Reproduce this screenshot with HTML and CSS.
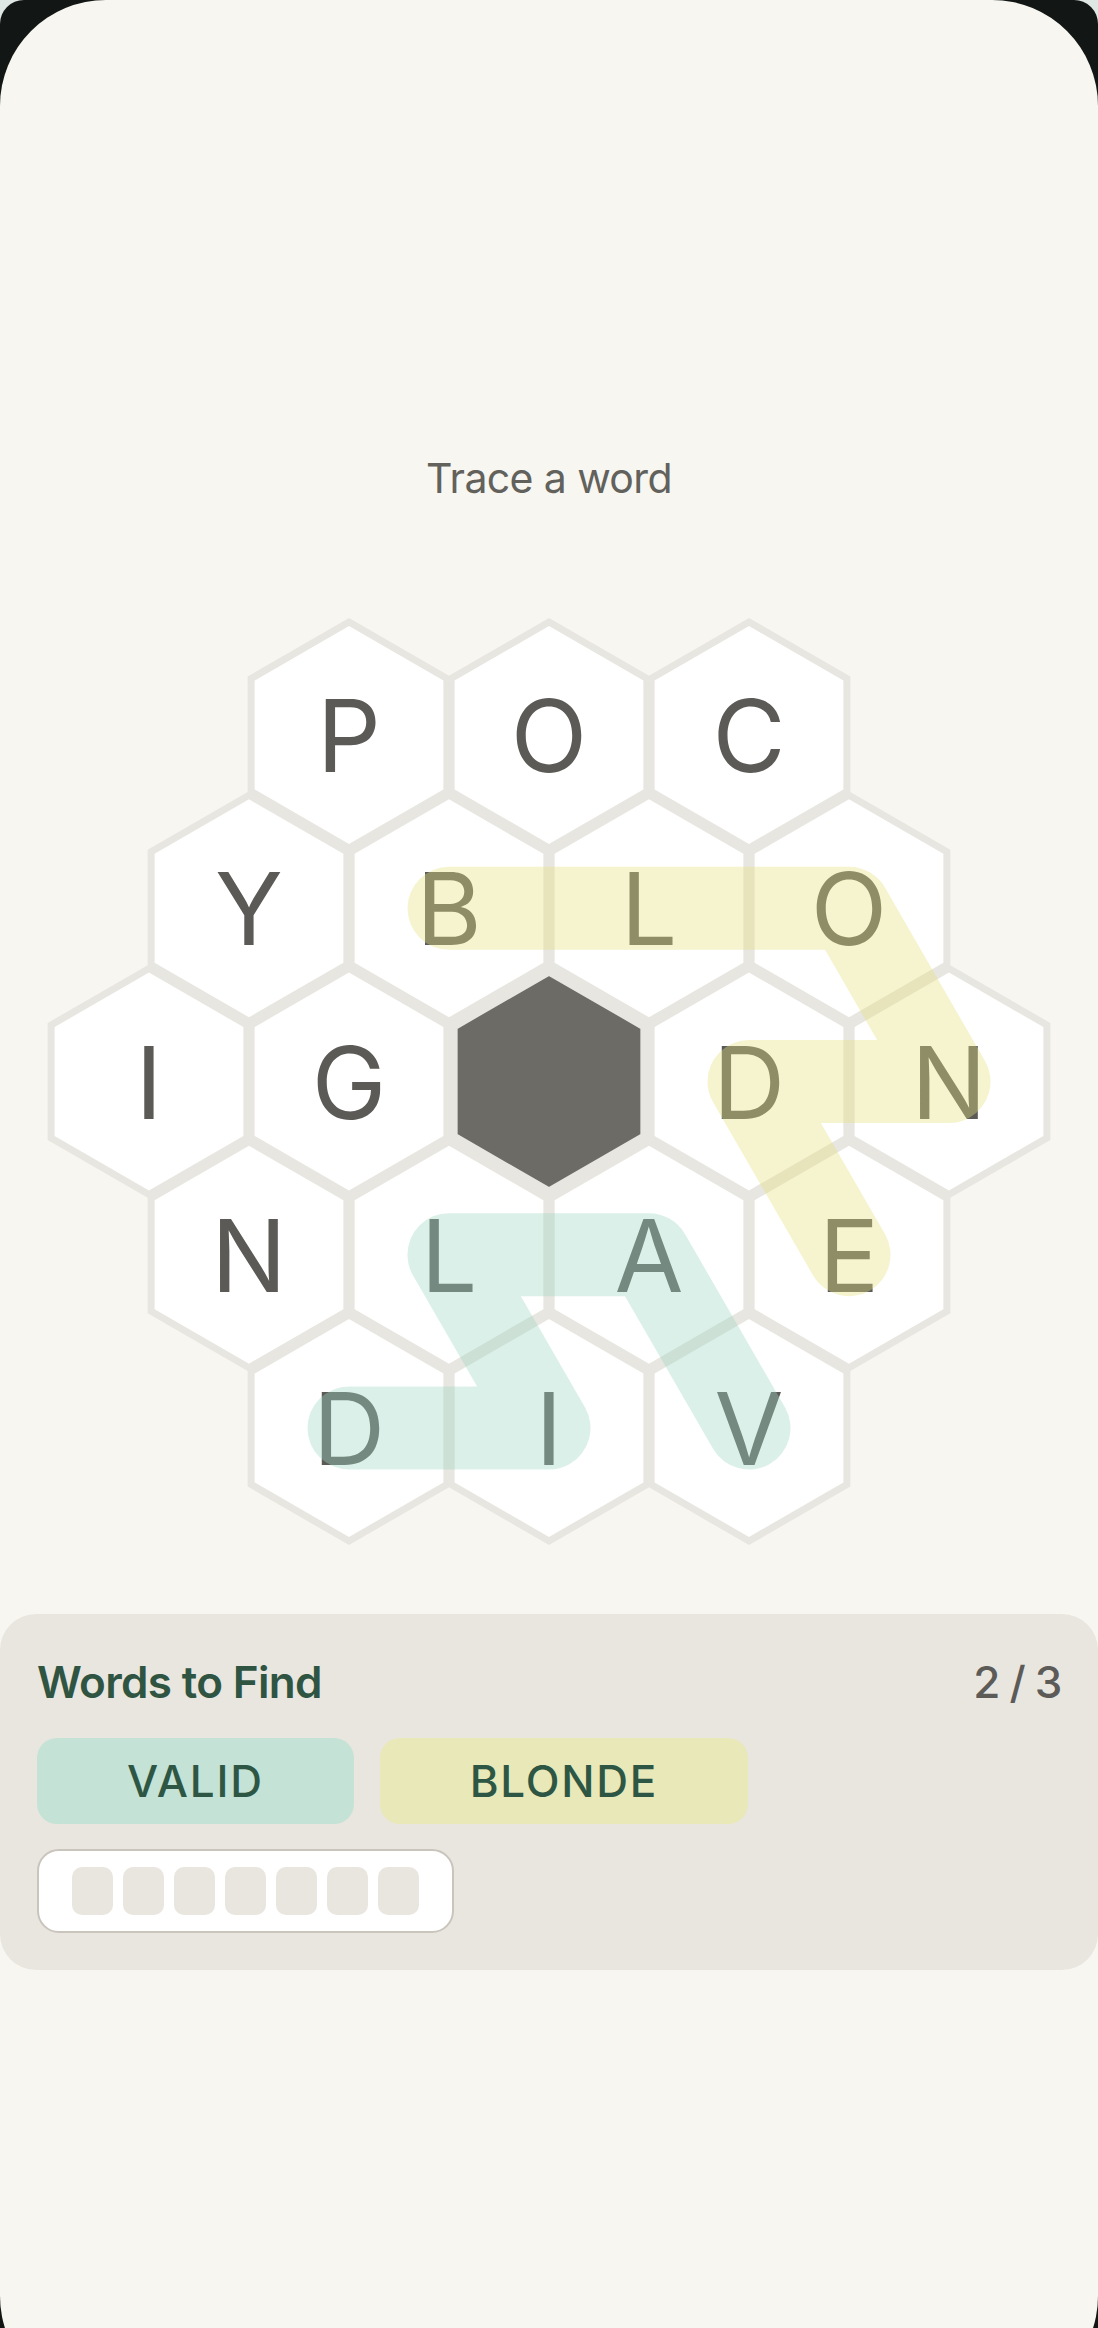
FILE: index.html
```html
<!DOCTYPE html>
<html lang="en">
<head>
<meta charset="utf-8">
<title>Trace a word</title>
<link rel="stylesheet" href="styles.css">
</head>
<body>
<div class="frame">
  <div class="screen">
    <p class="prompt">Trace a word</p>
    <svg class="board" viewBox="0 600 1098 960" width="1098" height="960" xmlns="http://www.w3.org/2000/svg">
      <defs>
        <polygon id="hex" points="0,-113 97.86,-56.5 97.86,56.5 0,113 -97.86,56.5 -97.86,-56.5"/>
      </defs>
      <g class="cells">
        <use href="#hex" x="349" y="735"/>
        <use href="#hex" x="549" y="735"/>
        <use href="#hex" x="749" y="735"/>
        <use href="#hex" x="249" y="908.3"/>
        <use href="#hex" x="449" y="908.3"/>
        <use href="#hex" x="649" y="908.3"/>
        <use href="#hex" x="849" y="908.3"/>
        <use href="#hex" x="149" y="1081.5"/>
        <use href="#hex" x="349" y="1081.5"/>
        <use href="#hex" x="749" y="1081.5"/>
        <use href="#hex" x="949" y="1081.5"/>
        <use href="#hex" x="249" y="1254.7"/>
        <use href="#hex" x="449" y="1254.7"/>
        <use href="#hex" x="649" y="1254.7"/>
        <use href="#hex" x="849" y="1254.7"/>
        <use href="#hex" x="349" y="1428"/>
        <use href="#hex" x="549" y="1428"/>
        <use href="#hex" x="749" y="1428"/>
      </g>
      <use class="hole" href="#hex" x="549" y="1081.5"/>
      <g class="letters">
        <text x="349" y="772">P</text>
        <text x="549" y="772">O</text>
        <text x="749" y="772">C</text>
        <text x="249" y="945.3">Y</text>
        <text x="449" y="945.3">B</text>
        <text x="649" y="945.3">L</text>
        <text x="849" y="945.3">O</text>
        <text x="149" y="1118.5">I</text>
        <text x="349" y="1118.5">G</text>
        <text x="749" y="1118.5">D</text>
        <text x="949" y="1118.5">N</text>
        <text x="249" y="1291.7">N</text>
        <text x="449" y="1291.7">L</text>
        <text x="649" y="1291.7">A</text>
        <text x="849" y="1291.7">E</text>
        <text x="349" y="1465">D</text>
        <text x="549" y="1465">I</text>
        <text x="749" y="1465">V</text>
      </g>
      <g class="trail trail-yellow">
        <polyline points="449,908.3 849,908.3 949,1081.5 749,1081.5 849,1254.7"/>
      </g>
      <g class="trail trail-teal">
        <polyline points="749,1428 649,1254.7 449,1254.7 549,1428 349,1428"/>
      </g>
    </svg>
    <section class="panel">
      <div class="panel-head">
        <h2 class="title">Words to Find</h2>
        <span class="count">2 / 3</span>
      </div>
      <div class="chips">
        <span class="chip chip-teal">VALID</span>
        <span class="chip chip-yellow">BLONDE</span>
      </div>
      <div class="progress">
        <span class="cell"></span>
        <span class="cell"></span>
        <span class="cell"></span>
        <span class="cell"></span>
        <span class="cell"></span>
        <span class="cell"></span>
        <span class="cell"></span>
      </div>
    </section>
  </div>
</div>
</body>
</html>
```

FILE: styles.css
```css
html, body {
  margin: 0;
  padding: 0;
  height: 2328px;
  overflow: hidden;
  background: #dfe7e4;
}

.frame {
  height: 2328px;
  background: #121614;
  border-top-left-radius: 24px;
  border-top-right-radius: 24px;
  overflow: hidden;
}

.screen {
  height: 2402px;
  box-sizing: border-box;
  padding-top: 453px;
  background: #f7f6f1;
  border-radius: 106px;
  font-family: Inter, "Noto Sans", sans-serif;
}

.prompt {
  margin: 0;
  text-align: center;
  font-size: 41px;
  line-height: 50px;
  font-weight: 400;
  letter-spacing: -0.015em;
  color: #62615c;
}

.board {
  display: block;
  margin-top: 97px;
}

.cells use {
  fill: #ffffff;
  stroke: #e8e6e0;
  stroke-width: 7;
}

.hole {
  fill: #6c6b65;
  stroke: #e8e6e0;
  stroke-width: 13;
}

.letters text {
  font-family: Inter, "Noto Sans", sans-serif;
  font-size: 100px;
  font-weight: 400;
  fill: #5b5a56;
  text-anchor: middle;
}

.trail {
  opacity: 0.38;
}

.trail polyline {
  fill: none;
  stroke-width: 83;
  stroke-linecap: round;
  stroke-linejoin: round;
}

.trail-yellow polyline {
  stroke: #e4e382;
}

.trail-teal polyline {
  stroke: #9dd7c2;
}

.panel {
  margin-top: 54px;
  background: #e9e6e0;
  border-radius: 36px;
  padding: 42px 37px 37px;
}

.panel-head {
  display: flex;
  justify-content: space-between;
  align-items: baseline;
}

.title {
  margin: 0;
  font-size: 44px;
  line-height: 52px;
  font-weight: 600;
  letter-spacing: -0.015em;
  color: #2f5542;
}

.count {
  font-size: 44px;
  line-height: 52px;
  font-weight: 500;
  letter-spacing: -0.03em;
  color: #5c5b57;
}

.chips {
  display: flex;
  gap: 26px;
  margin-top: 30px;
}

.chip {
  height: 86px;
  box-sizing: border-box;
  padding: 0 90px;
  border-radius: 20px;
  display: flex;
  align-items: center;
  font-size: 44px;
  font-weight: 500;
  letter-spacing: 0.04em;
  color: #2d5744;
}

.chip-teal {
  background: #c5e2d6;
}

.chip-yellow {
  background: #e9e8b8;
}

.progress {
  display: flex;
  width: fit-content;
  gap: 10px;
  margin-top: 25px;
  padding: 16px 33px;
  background: #ffffff;
  border: 2px solid #c9c5bd;
  border-radius: 22px;
}

.cell {
  width: 41px;
  height: 48px;
  border-radius: 10px;
  background: #e9e6e0;
}
```
